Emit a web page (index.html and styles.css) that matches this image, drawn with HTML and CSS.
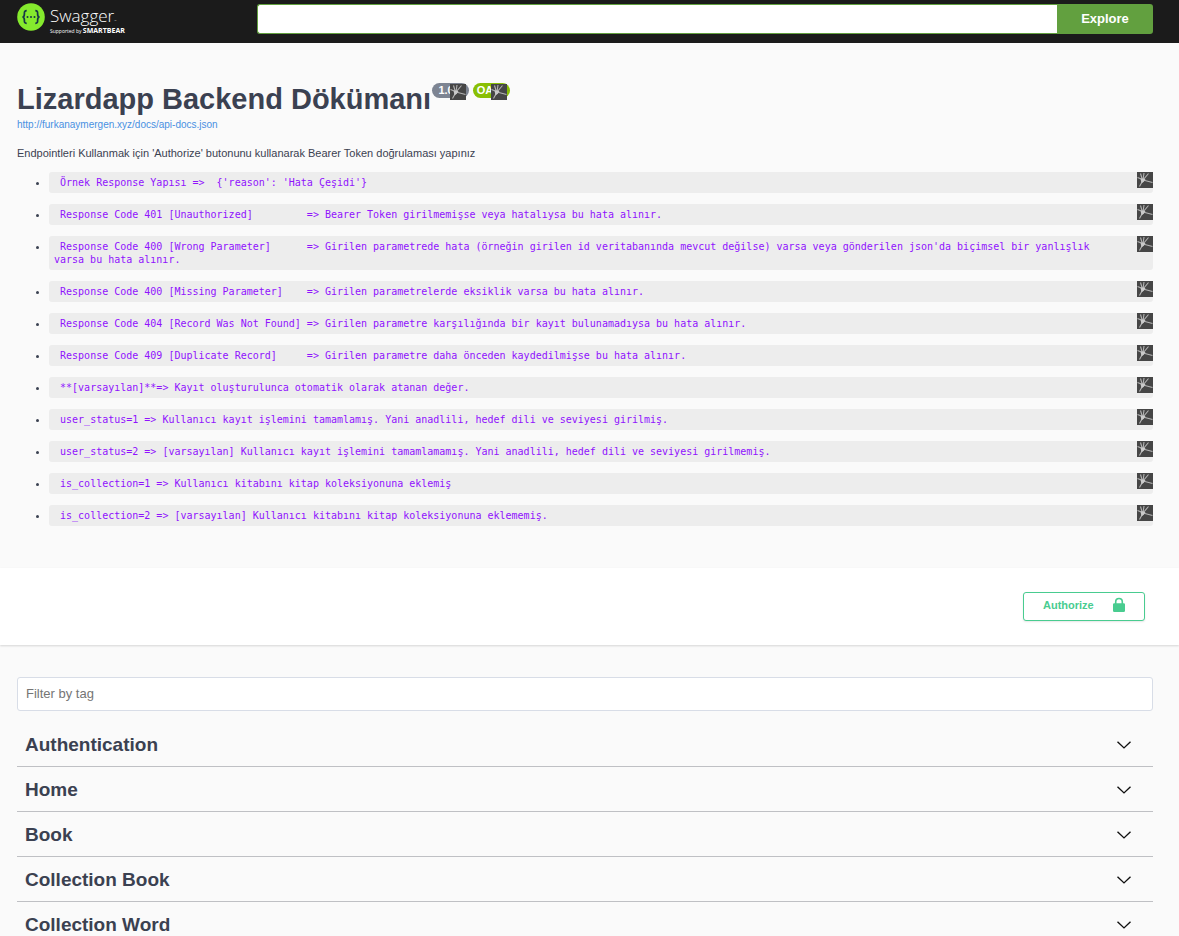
FILE: index.html
```html
<!DOCTYPE html>
<html lang="tr">
<head>
<meta charset="utf-8">
<title>Lizardapp Backend Dökümanı</title>
<link rel="stylesheet" href="styles.css">
</head>
<body>
<svg class="defs" aria-hidden="true">
  <symbol id="burst" viewBox="0 0 16 16">
    <rect width="16" height="16" fill="#464646"/>
    <path d="M5.500 7.500 .5 5.500M5.500 8 3.500 1.500M6 8 7 1M6 8 11.500 1.500M6 8 15.500 10.500M5.500 9 2.500 14.500" stroke="#b4b4b4" stroke-width="1.100" fill="none"/>
    <path d="M3.500 6.500 8.500 7 7 9.500 4.500 11.500Z" fill="#cacaca"/>
  </symbol>
  <symbol id="chevron" viewBox="0 0 20 20">
    <path d="M3.500 6.700 10 12.900 16.500 6.700" fill="none" stroke="#111" stroke-width="1.400"/>
  </symbol>
</svg>

<header class="topbar">
  <a class="logo" href="#" aria-label="Swagger">
    <svg class="logo-mark" viewBox="0 0 28 28">
      <circle cx="14" cy="14" r="13.800" fill="#85ea2d"/>
      <g fill="none" stroke="#173647" stroke-width="1.700">
        <path d="M9.700 7.700C7.600 7.700 7.300 8.700 7.400 10.500 7.500 12.600 7.300 13.800 5.500 14 7.300 14.200 7.500 15.400 7.400 17.500 7.300 19.300 7.600 20.300 9.700 20.300"/>
        <path d="M18.300 7.700C20.400 7.700 20.700 8.700 20.600 10.500 20.500 12.600 20.700 13.800 22.500 14 20.700 14.200 20.500 15.400 20.600 17.500 20.700 19.300 20.400 20.300 18.300 20.300"/>
      </g>
      <g fill="#173647"><circle cx="10.500" cy="14" r="1"/><circle cx="14" cy="14" r="1"/><circle cx="17.500" cy="14" r="1"/></g>
    </svg>
    <span class="logo-text">
      <span class="logo-name">Swagger<span class="logo-dot">™</span></span>
      <span class="logo-sub">Supported by <b>SMARTBEAR</b></span>
    </span>
  </a>
  <form class="search">
    <input type="text" aria-label="API definition URL">
    <button type="button">Explore</button>
  </form>
</header>

<main>
  <section class="info">
    <div class="heading">
      <h1>Lizardapp Backend Dökümanı</h1>
      <div class="badges">
        <span class="badge">1.0.0<svg class="burst"><use href="#burst"/></svg></span>
        <span class="badge badge-oas">OAS3<svg class="burst"><use href="#burst"/></svg></span>
      </div>
    </div>
    <a class="spec" href="#">http://furkanaymergen.xyz/docs/api-docs.json</a>
    <p>Endpointleri Kullanmak için 'Authorize' butonunu kullanarak Bearer Token doğrulaması yapınız</p>
    <ul class="notes">
      <li><code> Örnek Response Yapısı =&gt;  {'reason': 'Hata Çeşidi'}</code><svg class="burst"><use href="#burst"/></svg></li>
      <li><code> Response Code 401 [Unauthorized]         =&gt; Bearer Token girilmemişse veya hatalıysa bu hata alınır.</code><svg class="burst"><use href="#burst"/></svg></li>
      <li><code> Response Code 400 [Wrong Parameter]      =&gt; Girilen parametrede hata (örneğin girilen id veritabanında mevcut değilse) varsa veya gönderilen json'da biçimsel bir yanlışlık varsa bu hata alınır.</code><svg class="burst"><use href="#burst"/></svg></li>
      <li><code> Response Code 400 [Missing Parameter]    =&gt; Girilen parametrelerde eksiklik varsa bu hata alınır.</code><svg class="burst"><use href="#burst"/></svg></li>
      <li><code> Response Code 404 [Record Was Not Found] =&gt; Girilen parametre karşılığında bir kayıt bulunamadıysa bu hata alınır.</code><svg class="burst"><use href="#burst"/></svg></li>
      <li><code> Response Code 409 [Duplicate Record]     =&gt; Girilen parametre daha önceden kaydedilmişse bu hata alınır.</code><svg class="burst"><use href="#burst"/></svg></li>
      <li><code> **[varsayılan]**=&gt; Kayıt oluşturulunca otomatik olarak atanan değer.</code><svg class="burst"><use href="#burst"/></svg></li>
      <li><code> user_status=1 =&gt; Kullanıcı kayıt işlemini tamamlamış. Yani anadlili, hedef dili ve seviyesi girilmiş.</code><svg class="burst"><use href="#burst"/></svg></li>
      <li><code> user_status=2 =&gt; [varsayılan] Kullanıcı kayıt işlemini tamamlamamış. Yani anadlili, hedef dili ve seviyesi girilmemiş.</code><svg class="burst"><use href="#burst"/></svg></li>
      <li><code> is_collection=1 =&gt; Kullanıcı kitabını kitap koleksiyonuna eklemiş</code><svg class="burst"><use href="#burst"/></svg></li>
      <li><code> is_collection=2 =&gt; [varsayılan] Kullanıcı kitabını kitap koleksiyonuna eklememiş.</code><svg class="burst"><use href="#burst"/></svg></li>
    </ul>
  </section>

  <section class="auth">
    <button class="authorize" type="button">Authorize
      <svg viewBox="0 0 16 16"><path d="M3.900 6.200V4.800A4.100 4.100 0 0 1 12.100 4.800V6.200H12.700A1.300 1.300 0 0 1 14 7.500V13.800A1.300 1.300 0 0 1 12.700 15.100H3.300A1.300 1.300 0 0 1 2 13.800V7.500A1.300 1.300 0 0 1 3.300 6.200ZM5.500 6.200H10.500V4.900A2.500 2.700 0 0 0 5.500 4.900Z" fill="#49cc90" fill-rule="evenodd"/></svg>
    </button>
  </section>

  <section class="tags">
    <input class="filter" type="text" placeholder="Filter by tag" aria-label="Filter by tag">
    <h2><button type="button">Authentication<svg><use href="#chevron"/></svg></button></h2>
    <h2><button type="button">Home<svg><use href="#chevron"/></svg></button></h2>
    <h2><button type="button">Book<svg><use href="#chevron"/></svg></button></h2>
    <h2><button type="button">Collection Book<svg><use href="#chevron"/></svg></button></h2>
    <h2><button type="button">Collection Word<svg><use href="#chevron"/></svg></button></h2>
  </section>
</main>
</body>
</html>
```
FILE: styles.css
```css
* { box-sizing: border-box; }

html { overflow-x: hidden; scrollbar-width: none; }

body {
  margin: 0;
  background: #fafafa;
  color: #3b4151;
  font-family: "Liberation Sans", Arial, sans-serif;
  font-size: 11px;
}

button, input { font-family: inherit; margin: 0; }

.defs { display: none; }

.topbar {
  display: flex;
  align-items: flex-start;
  height: 43px;
  padding: 3px 26px 0 17px;
  background: #1b1b1b;
}

.logo {
  display: flex;
  flex: 0 0 240px;
  gap: 5px;
  color: #fff;
  text-decoration: none;
}

.logo-mark { width: 28px; height: 28px; }

.logo-text {
  display: flex;
  flex-direction: column;
  font-family: "Open Sans", "Noto Sans", sans-serif;
}

.logo-name { height: 24px; font-size: 17px; font-weight: 300; line-height: 26px; }
.logo-dot { font-size: 3px; }
.logo-sub { font-size: 5px; line-height: 8px; white-space: nowrap; }
.logo-sub b { font-size: 7px; font-family: "Open Sans", sans-serif; }

.search { display: flex; flex: 1; padding-top: 1px; }

.search input {
  flex: 1;
  min-width: 0;
  height: 30px;
  border: 1px solid #62a03f;
  border-right: 0;
  border-radius: 3px 0 0 3px;
  background: #fff;
}

.search button {
  width: 96px;
  height: 30px;
  padding: 0 0 1px;
  border: 0;
  border-radius: 0 3px 3px 0;
  background: #62a03f;
  color: #fff;
  font-size: 13px;
  font-weight: 700;
}

.info { padding: 40px 26px 41px 17px; }

.heading { display: flex; align-items: flex-start; gap: 1px; }

h1 { margin: 0; font-size: 29px; line-height: 33px; }

.badges { display: flex; gap: 4px; }

.badge {
  position: relative;
  width: 37px;
  height: 15px;
  border-radius: 8px;
  background: #7d8492;
  color: #fff;
  font-size: 11px;
  font-weight: 700;
  line-height: 15px;
  text-align: center;
}

.badge-oas { background: #89bf04; }

.burst { position: absolute; top: 0; right: 0; width: 16px; height: 16px; }
.badge .burst { top: 1px; right: 3px; }

.spec {
  display: block;
  color: #4990e2;
  font-size: 10px;
  line-height: 18px;
  text-decoration: none;
}

.info p { margin: 12px 0; line-height: 14px; }

.notes {
  display: flex;
  flex-direction: column;
  gap: 11px;
  margin: 0;
  padding: 0 0 1px 32px;
}

.notes li { position: relative; }

.notes code {
  display: block;
  padding: 4px 36px 4px 5px;
  border-radius: 3px;
  background: #ededed;
  color: #9012fe;
  font-family: "DejaVu Sans Mono", monospace;
  font-size: 10px;
  line-height: 13px;
  white-space: pre-wrap;
}

.auth {
  display: flex;
  justify-content: flex-end;
  padding: 24px 34px;
  background: #fff;
  box-shadow: 0 1px 2px rgba(0, 0, 0, 0.15);
}

.authorize {
  display: flex;
  align-items: center;
  justify-content: space-between;
  width: 122px;
  height: 29px;
  padding: 0 17px 3px 19px;
  border: 1px solid #49cc90;
  border-radius: 3px;
  background: #fff;
  color: #49cc90;
  font-size: 11px;
  font-weight: 700;
  box-shadow: 0 1px 2px rgba(0, 0, 0, 0.1);
}

.authorize svg { width: 16px; height: 16px; }

.tags { padding: 32px 26px 0 17px; }

.filter {
  display: block;
  width: 100%;
  height: 34px;
  margin-bottom: 11px;
  padding: 0 8px 2px;
  border: 1px solid #d8dde7;
  border-radius: 3px;
  background: #fff;
  font-size: 13px;
}

.filter::placeholder { color: #757575; }

h2 { margin: 0; border-bottom: 1px solid #bfc0c4; }

h2 button {
  display: flex;
  align-items: center;
  justify-content: space-between;
  width: 100%;
  height: 44px;
  padding: 1px 19px 0 8px;
  border: 0;
  background: none;
  color: #3b4151;
  font-size: 19px;
  font-weight: 700;
}

h2 svg { width: 20px; height: 20px; }
```
